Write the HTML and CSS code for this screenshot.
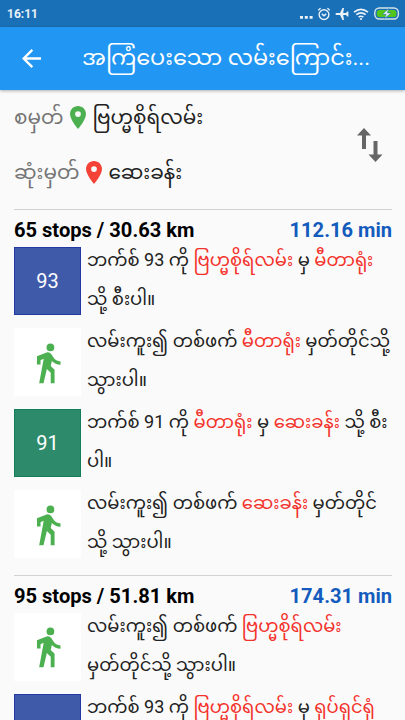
FILE: index.html
```html
<!DOCTYPE html>
<html lang="my">
<head>
<meta charset="utf-8">
<title>Suggested routes</title>
<link rel="stylesheet" href="styles.css">
</head>
<body>
<svg class="defs" width="0" height="0">
  <symbol id="pin" viewBox="5 2 14 20"><path d="M12 2C8.13 2 5 5.13 5 9c0 5.25 7 13 7 13s7-7.75 7-13c0-3.87-3.13-7-7-7zm0 9.5a2.5 2.5 0 0 1 0-5 2.5 2.5 0 0 1 0 5z"/></symbol>
  <symbol id="walk" viewBox="0 0 26 42"><circle cx="15" cy="4.300" r="4"/><path d="M1 22V13.500L11 9.500q3-.8 5 2l2 3q2.500 4 7.500 4.300v3.500q-5.500-.2-9-4l-1.200 5.200 4 4V41.500h-4V30.500l-4-3.800-3.500 14.800H3.300L8 16l-3.300 1.500V22z"/></symbol>
</svg>
<div class="status">
  <span class="clock">16:11</span>
  <div class="tray">
    <svg class="dots" width="14" height="14" viewBox="0 0 14 14"><path d="M1 9h3v2.700H1zM5.800 9h3v2.700h-3zM10.600 9h3v2.700h-3z"/></svg>
    <svg class="alarm" width="14" height="14" viewBox="0 0 14 14"><circle cx="7" cy="7.600" r="4.900"/><path d="M1.200 3.200l2.400-2M12.800 3.200l-2.400-2M4.800 6.900L7 8.800l2.200-1.900"/></svg>
    <svg class="plane" width="14" height="14" viewBox="0 0 14 14"><path d="M.5 7c0-.7.500-1 1.200-1H5L7.500 1H9l-.8 5H11l1.200-1.600h1.200v5.200h-1.200L11 8H8.200L9 13H7.500L5 8H1.700C1 8 .5 7.700.5 7z"/></svg>
    <svg class="wifi" width="16" height="14" viewBox="0 0 16 14"><path d="M1 5.200q7-5.600 14 0M3.300 7.700q4.700-3.700 9.400 0M5.600 10.100q2.400-1.700 4.800 0"/><circle cx="8" cy="12" r="1.100"/></svg>
    <svg class="battery" width="26" height="13" viewBox="0 0 26 13"><rect class="case" x=".8" y="1" width="23.600" height="11" rx="4.500"/><rect class="charge" x="2.800" y="3" width="19.600" height="7" rx="2.800"/><path class="bolt" d="M14.800 1.500L8.500 7.300h3.700l-1.500 4.300L17 5.900h-3.700z"/></svg>
  </div>
</div>
<header class="appbar">
  <svg class="back" width="19" height="19" viewBox="4 4 16 16"><path d="M20 11H7.830l5.590-5.590L12 4l-8 8 8 8 1.410-1.410L7.830 13H20v-2z"/></svg>
  <h1>အကြံပေးသော လမ်းကြောင်း...</h1>
</header>
<main>
  <section class="trip">
    <div class="ends">
      <div class="end"><span class="label">စမှတ်</span><svg class="pin from"><use href="#pin"/></svg><span>ဗြဟ္မစိုရ်လမ်း</span></div>
      <div class="end"><span class="label">ဆုံးမှတ်</span><svg class="pin to"><use href="#pin"/></svg><span>ဆေးခန်း</span></div>
    </div>
    <svg class="swap" width="26" height="34" viewBox="0 0 26 34"><path d="M7 0L0 7.500h5V21h4V7.500h5zM18.500 34l7-7.500h-5V13h-4v13.500h-5z"/></svg>
  </section>
  <section class="route">
    <div class="summary"><span>65 stops / 30.63 km</span><span class="time">112.16 min</span></div>
    <div class="step"><div class="tile blue">93</div><p>ဘက်စ် 93 ကို <b>ဗြဟ္မစိုရ်လမ်း</b> မှ <b>မီတာရုံး</b><br>သို့ စီးပါ။</p></div>
    <div class="step"><div class="tile walk"><svg><use href="#walk"/></svg></div><p>လမ်းကူး၍ တစ်ဖက် <b>မီတာရုံး</b> မှတ်တိုင်သို့<br>သွားပါ။</p></div>
    <div class="step"><div class="tile green">91</div><p>ဘက်စ် 91 ကို <b>မီတာရုံး</b> မှ <b>ဆေးခန်း</b> သို့ စီး<br>ပါ။</p></div>
    <div class="step"><div class="tile walk"><svg><use href="#walk"/></svg></div><p>လမ်းကူး၍ တစ်ဖက် <b>ဆေးခန်း</b> မှတ်တိုင်<br>သို့ သွားပါ။</p></div>
  </section>
  <section class="route">
    <div class="summary"><span>95 stops / 51.81 km</span><span class="time">174.31 min</span></div>
    <div class="step"><div class="tile walk"><svg><use href="#walk"/></svg></div><p>လမ်းကူး၍ တစ်ဖက် <b>ဗြဟ္မစိုရ်လမ်း</b><br>မှတ်တိုင်သို့ သွားပါ။</p></div>
    <div class="step"><div class="tile blue"></div><p>ဘက်စ် 93 ကို <b>ဗြဟ္မစိုရ်လမ်း</b> မှ <b>ရုပ်ရှင်ရုံ</b></p></div>
  </section>
</main>
</body>
</html>
```
FILE: styles.css
```css
* { box-sizing: border-box; }
html, body { height: 720px; overflow: hidden; }
body {
  margin: 0;
  display: flex;
  flex-direction: column;
  background: #fafafa;
  color: #212121;
  font-family: Roboto, "Noto Sans Myanmar", "Noto Sans", sans-serif;
}
.defs { position: absolute; }
.status {
  flex: none;
  height: 27px;
  padding: 0 5px 0 7px;
  display: flex;
  align-items: center;
  justify-content: space-between;
  background: #1a70b7;
  color: #e8f1f8;
}
.clock { font-size: 12px; font-weight: 700; padding-top: 1px; }
.tray { display: flex; align-items: center; gap: 4px; fill: #e8f1f8; }
.alarm, .wifi path { fill: none; stroke: #e8f1f8; stroke-width: 1.4; }
.wifi path { stroke-width: 1.7; }
.battery { margin-left: 1px; }
.case { fill: none; stroke: #d3e4e8; stroke-width: 1.4; }
.charge { fill: #53c51b; }
.bolt { stroke: #1a70b7; stroke-width: .5; }
.appbar {
  flex: none;
  position: relative;
  height: 63px;
  padding-left: 22px;
  display: flex;
  align-items: center;
  background: #2196f3;
  color: #fff;
  box-shadow: 0 1px 3px rgba(0, 0, 0, .3);
}
.back { fill: #fff; }
h1 { margin: -4px 0 0 41px; font-size: 22.400px; line-height: 50px; font-weight: 400; white-space: nowrap; }
main { flex: 1; min-height: 0; overflow: hidden; padding: 0 13px 0 14px; }
.trip { height: 119px; display: flex; justify-content: space-between; }
.end { height: 55px; display: flex; align-items: center; font-size: 20px; line-height: 55px; white-space: nowrap; }
.label { color: #757575; }
.pin { width: 16px; height: 23px; margin: 0 6px 0 7px; }
.from { fill: #4caf50; }
.to { fill: #f44336; }
.swap { fill: #666; margin: 38px 9px 0 0; }
.route { border-top: 1px solid #d2d2d2; height: 365.500px; }
.summary { height: 37px; padding-top: 8px; display: flex; justify-content: space-between; font-size: 20.100px; line-height: 24px; font-weight: 700; color: #000; }
.time { color: #135bbd; }
.step { height: 81px; display: flex; gap: 6px; }
.tile { flex: none; width: 67px; height: 68px; display: flex; align-items: center; justify-content: center; color: #fff; font-size: 20px; }
.blue { background: #405aaa; border: 1px solid #2438a5; }
.green { background: #2d8b6c; border: 1px solid #137e5a; }
.walk { background: #fff; fill: #4caf50; }
.walk svg { width: 25px; height: 41px; margin: 2px 0 0 2px; }
p { margin: -7px 0 0; font-size: 18px; line-height: 39px; white-space: nowrap; }
b { font-weight: 400; color: #f3322b; }
```
